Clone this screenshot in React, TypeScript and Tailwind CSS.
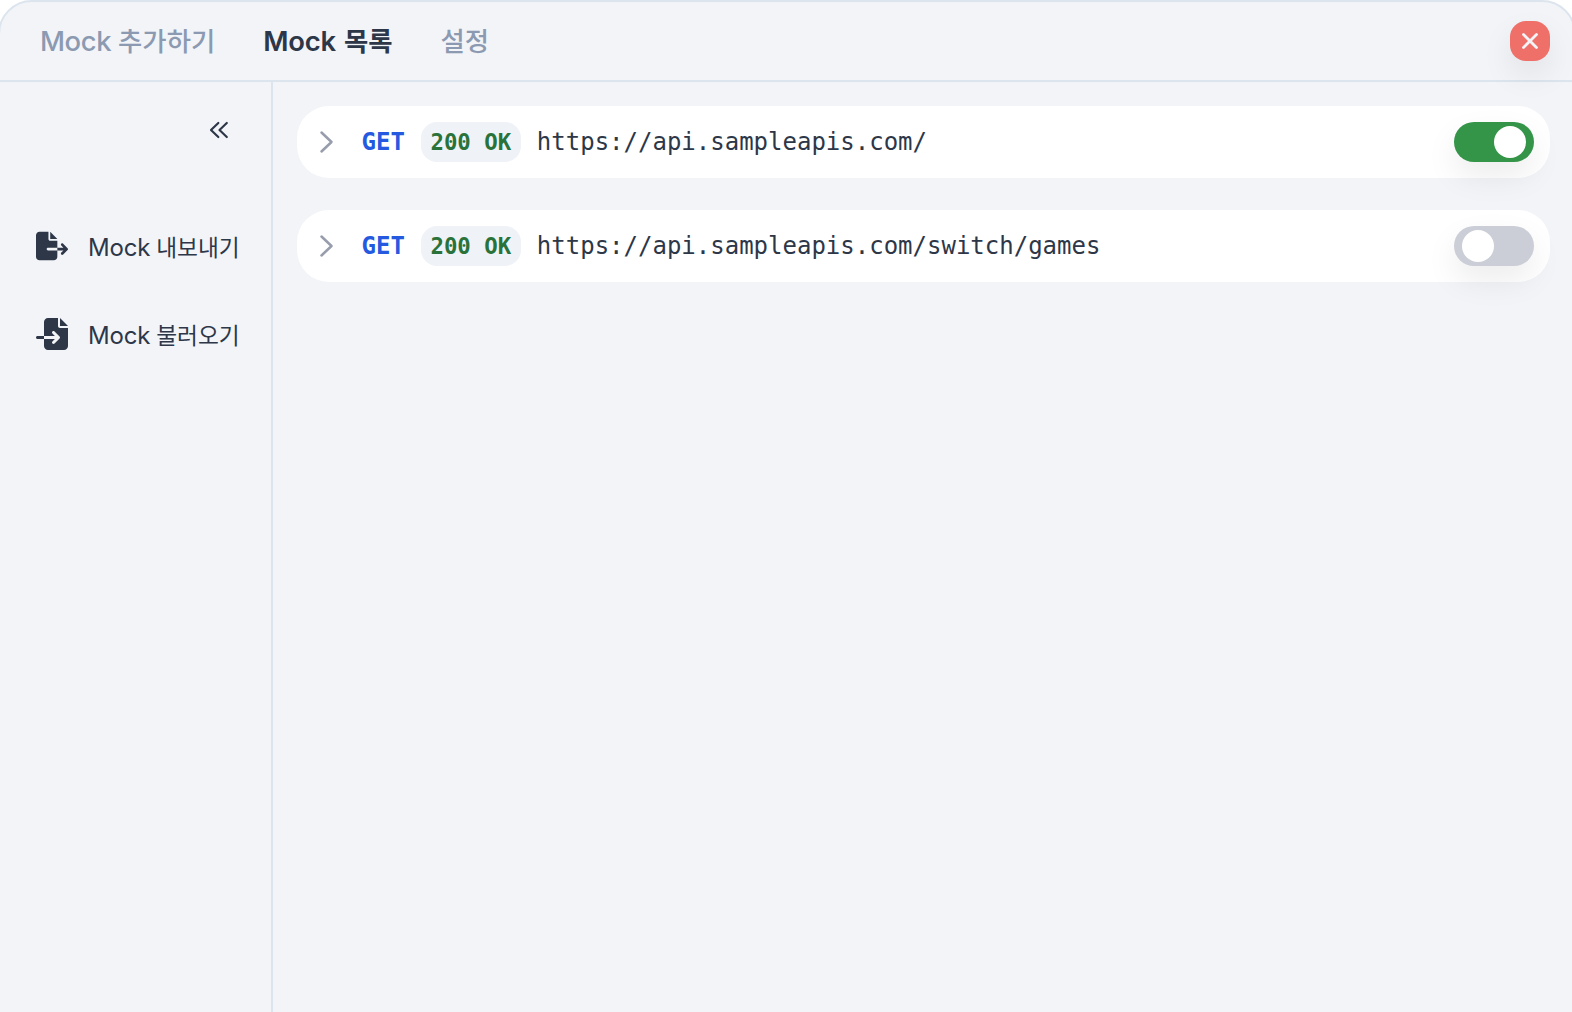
import { FaFileExport, FaFileImport } from "react-icons/fa6";

const tabs = [
  { latin: "Mock", hangul: "추가하기", active: false },
  { latin: "Mock", hangul: "목록", active: true },
  { latin: "", hangul: "설정", active: false },
];

const mocks = [
  { method: "GET", status: "200 OK", url: "https://api.sampleapis.com/", on: true },
  { method: "GET", status: "200 OK", url: "https://api.sampleapis.com/switch/games", on: false },
];

function Tab({ latin, hangul, active }: (typeof tabs)[number]) {
  return (
    <button
      className={`flex items-center whitespace-nowrap leading-10 ${
        active ? "font-semibold text-[#2d3748]" : "font-medium text-[#8b9ab1]"
      }`}
    >
      {latin && (
        <span
          className={`text-[27.4px] ${active ? "mr-2 tracking-[-0.2px]" : "mr-[7px] tracking-[-0.4px]"}`}
        >
          {latin}
        </span>
      )}
      <span className="text-[26.4px]">{hangul}</span>
    </button>
  );
}

function Toggle({ on }: { on: boolean }) {
  return (
    <button
      role="switch"
      aria-checked={on}
      className={`flex h-10 w-20 items-center rounded-[20px] px-2 shadow-[0_14px_32px_rgba(0,0,0,0.08)] ${
        on ? "justify-end bg-[#349549]" : "justify-start bg-[#cbced7]"
      }`}
    >
      <span className="size-8 rounded-full bg-white" />
    </button>
  );
}

function MockRow({ method, status, url, on }: (typeof mocks)[number]) {
  return (
    <div className="flex h-[72px] items-center rounded-[32px] bg-white px-4 font-['DejaVu_Sans_Mono',monospace] text-[24px]">
      <svg className="mr-[24.5px] size-6" viewBox="0 0 24 24" fill="none" stroke="#979dac" strokeWidth="2.5" strokeLinecap="round" strokeLinejoin="round">
        <path d="M8.5 2.5 18.5 12l-10 9.5" />
      </svg>
      <span className="font-bold text-[#2459e0]">{method}</span>
      <span className="ml-4 flex h-10 w-[100px] items-center justify-center rounded-2xl bg-[#eff2f7] pt-0.5 text-[22.4px] font-bold text-[#29733b]">
        {status}
      </span>
      <span className="ml-4 flex-1 text-[#2d3748]">{url}</span>
      <Toggle on={on} />
    </div>
  );
}

export default function App() {
  return (
    <div className="h-[1012px] overflow-hidden bg-white font-[Inter,'Noto_Sans_CJK_KR',sans-serif]">
      <div className="-ml-0.5 flex h-[1060px] w-[1578px] flex-col overflow-hidden rounded-[34px] border-2 border-[#dce4ee] bg-[#f2f4f8]">
        <header className="flex h-20 items-center justify-between border-b-2 border-[#dce4ee] pr-6 pl-10">
          <nav className="flex items-center gap-12">
            {tabs.map((tab) => (
              <Tab key={tab.hangul} {...tab} />
            ))}
          </nav>
          <button aria-label="close" className="flex size-10 items-center justify-center rounded-2xl bg-[#ee7068] shadow-[0_14px_32px_rgba(0,0,0,0.08)]">
            <svg className="size-4" viewBox="0 0 16 16" fill="none" stroke="#f4f4f8" strokeWidth="2.8" strokeLinecap="round">
              <path d="M1.5 1.5l13 13M14.5 1.5l-13 13" />
            </svg>
          </button>
        </header>
        <div className="flex flex-1">
          <aside className="flex w-[273px] flex-col border-r-2 border-[#dce4ee] text-[#2d3748]">
            <button aria-label="collapse" className="mt-9 mr-10 flex size-6 items-center justify-center self-end">
              <svg className="size-6" viewBox="0 0 24 24" fill="none" stroke="currentColor" strokeWidth="2.2" strokeLinecap="round" strokeLinejoin="round">
                <path d="M11.3 5 4 12l7.3 7M19.8 5l-7.3 7 7.3 7" />
              </svg>
            </button>
            <button className="mt-[82px] flex h-11 items-center pl-9 whitespace-nowrap">
              <FaFileExport className="mr-5 size-8" />
              <span className="mr-1.5 pt-1 text-[24px] tracking-[-0.2px]">Mock</span>
              <span className="pt-1 text-[22.7px]">내보내기</span>
            </button>
            <button className="mt-11 flex h-11 items-center pl-9 whitespace-nowrap">
              <FaFileImport className="mr-5 size-8" />
              <span className="mr-1.5 pt-1 text-[24px] tracking-[-0.2px]">Mock</span>
              <span className="pt-1 text-[22.7px]">불러오기</span>
            </button>
          </aside>
          <main className="flex flex-1 flex-col gap-8 p-6">
            {mocks.map((mock) => (
              <MockRow key={mock.url} {...mock} />
            ))}
          </main>
        </div>
      </div>
    </div>
  );
}
